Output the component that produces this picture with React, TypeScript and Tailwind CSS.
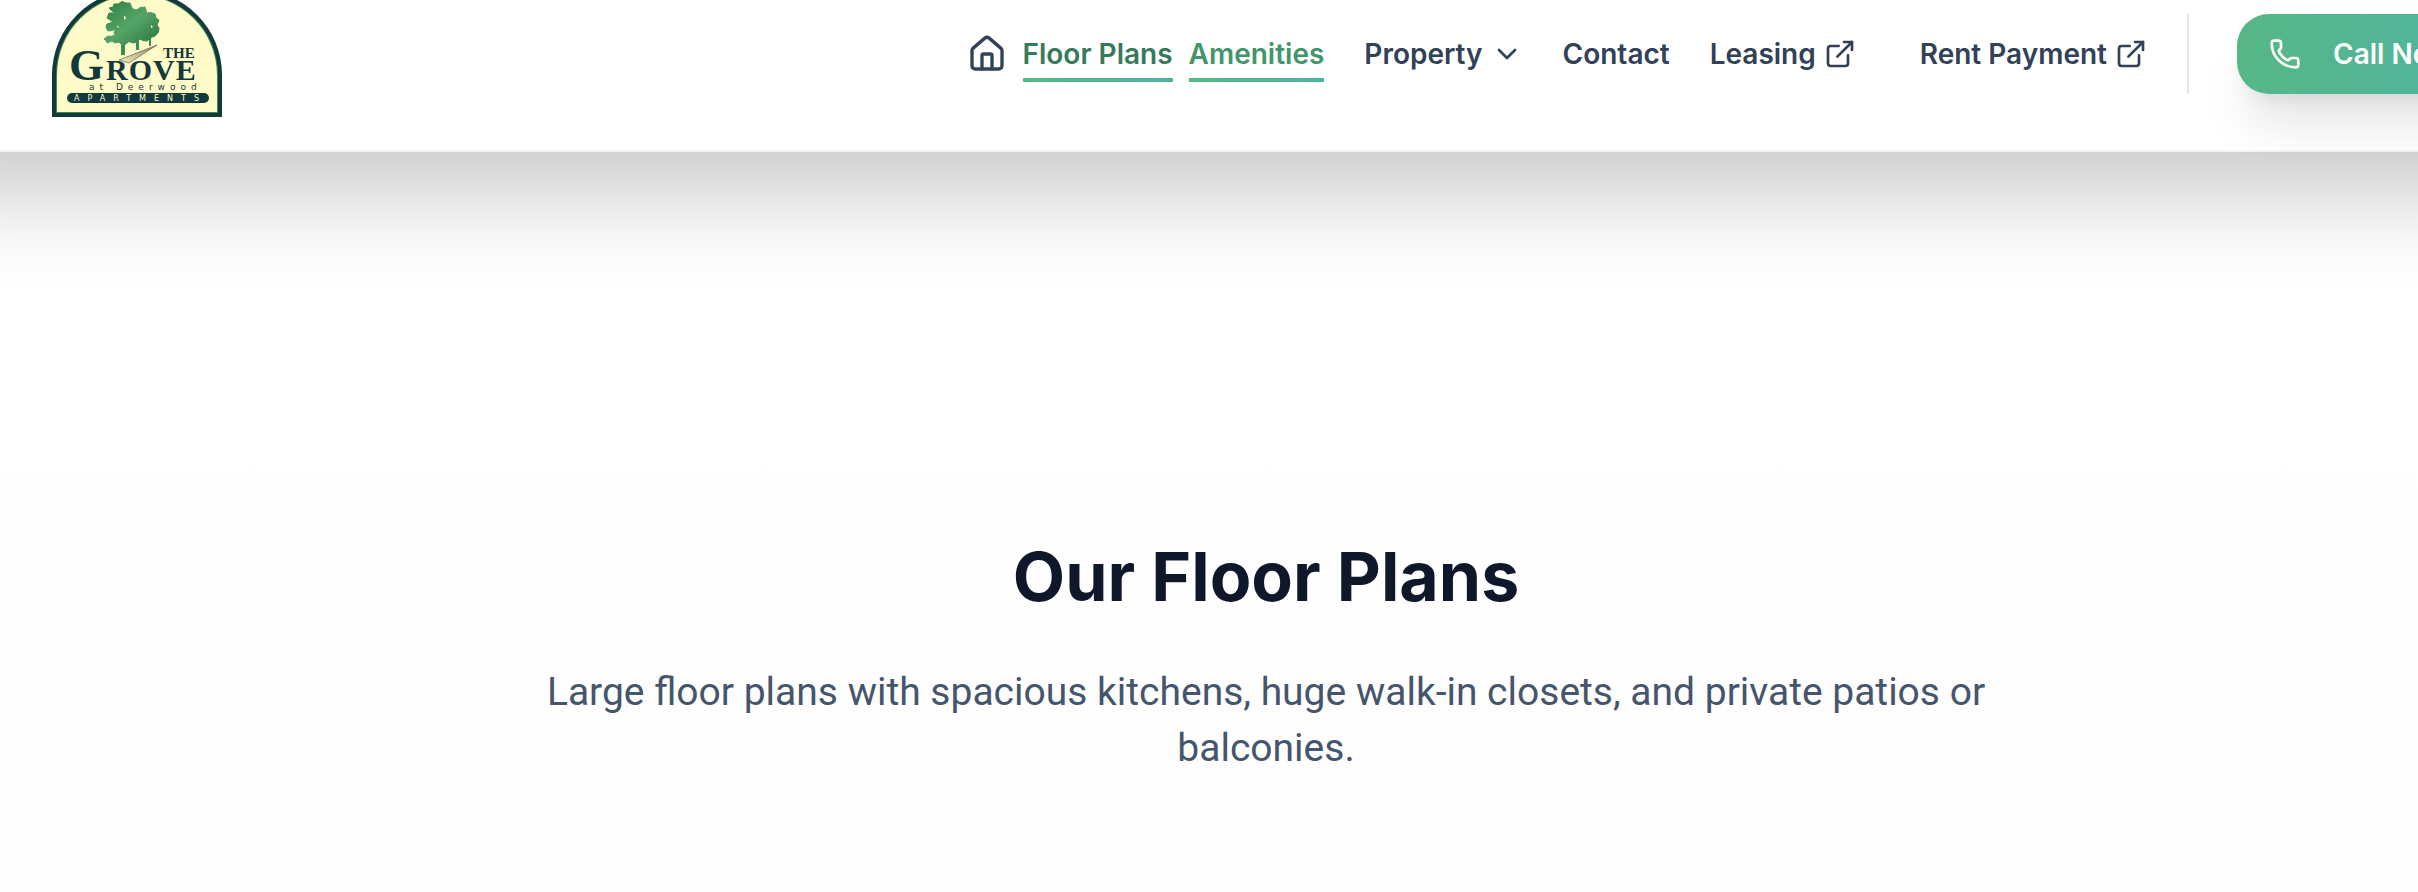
import React from "react";
import { House, ChevronDown, ExternalLink, Phone } from "lucide-react";

function Logo() {
  return (
    <svg viewBox="0 0 170 125" className="h-[125px] w-[170px] shrink-0 overflow-visible" role="img" aria-label="The Grove at Deerwood Apartments">
      <defs>
        <linearGradient id="leaf" x1="0" y1="0" x2="1" y2="1">
          <stop offset="0" stopColor="#2a7f42" />
          <stop offset="0.5" stopColor="#55a468" />
          <stop offset="1" stopColor="#26753c" />
        </linearGradient>
        <linearGradient id="lane" x1="0" y1="1" x2="1" y2="0">
          <stop offset="0" stopColor="#f3edb8" />
          <stop offset="1" stopColor="#8d8a78" />
        </linearGradient>
      </defs>
      <path d="M0 125V83a85 85 0 0 1 170 0v42z" fill="#12393b" />
      <path d="M4 121V83a81 81 0 0 1 162 0v38z" fill="#3c8a4d" />
      <path d="M5 120V83a80 80 0 0 1 160 0v37z" fill="#fffbc8" />
      <path d="M69 63V52l-5-3h14l-5 4v10zM84 58V48h3v10zM97 54V46h2v8z" fill="#3c8f50" />
      <path
        d="M70 9.5L74 11L78 11L80 16L82 17.5L85 18L88 15.5L93 15L95 21L99 20.5L103 22L104 26L107 28L105 33L107 36L106.500 40L103 44L99 45.500L95 49L91 48.500L88 47L85 50L81 51L75 49L70 53L67 50L63 51L60 49L55 51L54 48.500L52 47L56 44L59 44.500L63 43L62 40L64 37L60 38.500L56 39L54 35L55 32L61 30L58 28L55 26L57 21L63 21L60 19L57 16L61 15L62 12L66 12Z"
        fill="url(#leaf)"
        stroke="url(#leaf)"
        strokeWidth="1"
        strokeLinejoin="round"
      />
      <path d="M72 24l2 1-1 3-1-1zM99 33l2 2-2 1zM65 34l2 0-1 2z" fill="#fffbc8" />
      <path d="M67 68l38-15-28 18z" fill="url(#lane)" stroke="#4c4b42" strokeWidth="0.6" />
      <g fill="#12393b" fontFamily="'Liberation Serif', serif" fontWeight="700">
        <text x="17" y="88" fontSize="45">G</text>
        <text x="54" y="88" fontSize="30" letterSpacing="1">ROVE</text>
        <text x="111" y="66" fontSize="15">THE</text>
      </g>
      <text x="37" y="98" fontFamily="'DejaVu Sans', sans-serif" fontSize="9" letterSpacing="5" fill="#12393b">at Deerwood</text>
      <rect x="15" y="101" width="142" height="10" rx="5" fill="#12393b" />
      <text x="22" y="109" fontFamily="'DejaVu Sans', sans-serif" fontSize="8" letterSpacing="8" fill="#fffbc8">APARTMENTS</text>
    </svg>
  );
}

const tab =
  "border-b-4 pt-2 pb-1 leading-10 [border-image:linear-gradient(to_right,#56b785,#4fb3a5)_1]";

export default function App() {
  return (
    <div className="min-h-screen overflow-x-clip bg-gradient-to-b from-white from-40% to-[#fdfdfd] font-['Inter',sans-serif]">
      <header className="-mx-32 flex h-[152px] items-start border-b-2 border-slate-100 bg-white pr-32 pl-[180px] shadow-[0_58px_100px_-24px_rgba(0,0,0,0.25)]">
        <a href="#top" className="-mt-2 shrink-0">
          <Logo />
        </a>
        <nav className="ml-auto flex h-[108px] shrink-0 items-center gap-10 text-[28px] font-semibold whitespace-nowrap text-slate-700">
          <div className="flex items-center gap-4">
            <a href="#home" aria-label="Home">
              <House size={40} />
            </a>
            <a href="#floor-plans" className={"text-[#377a5a] " + tab}>Floor Plans</a>
            <a href="#amenities" className={"text-[#42956c] " + tab}>Amenities</a>
          </div>
          <button type="button" className="flex items-center gap-2">
            Property
            <ChevronDown size={32} />
          </button>
          <a href="#contact">Contact</a>
          <a href="#leasing" className="mr-6 flex items-center gap-2">
            Leasing
            <ExternalLink size={32} />
          </a>
          <a href="#rent" className="flex items-center gap-2">
            Rent Payment
            <ExternalLink size={32} />
          </a>
          <div className="h-20 w-[2px] bg-slate-200" />
        </nav>
        <div className="mt-[14px] ml-12 w-[181px] shrink-0">
          <a
            href="tel:"
            className="flex h-20 w-[290px] items-center gap-8 rounded-[32px] bg-gradient-to-r from-[#56b785] to-[#4fb3a5] px-8 text-[28px] font-semibold whitespace-nowrap text-white shadow-[0_40px_50px_-10px_rgba(0,0,0,0.1),0_16px_20px_-12px_rgba(0,0,0,0.1)]"
          >
            <Phone size={32} />
            Call Now
          </a>
        </div>
      </header>
      <main className="pt-[384px] pl-[114px] text-center">
        <h1 className="text-[68px] leading-[80px] font-bold text-slate-900">Our Floor Plans</h1>
        <p className="mx-auto mt-12 max-w-[1500px] font-[Roboto,sans-serif] text-[39px] leading-[56px] text-slate-600">
          Large floor plans with spacious kitchens, huge walk-in closets, and private patios or balconies.
        </p>
      </main>
    </div>
  );
}
